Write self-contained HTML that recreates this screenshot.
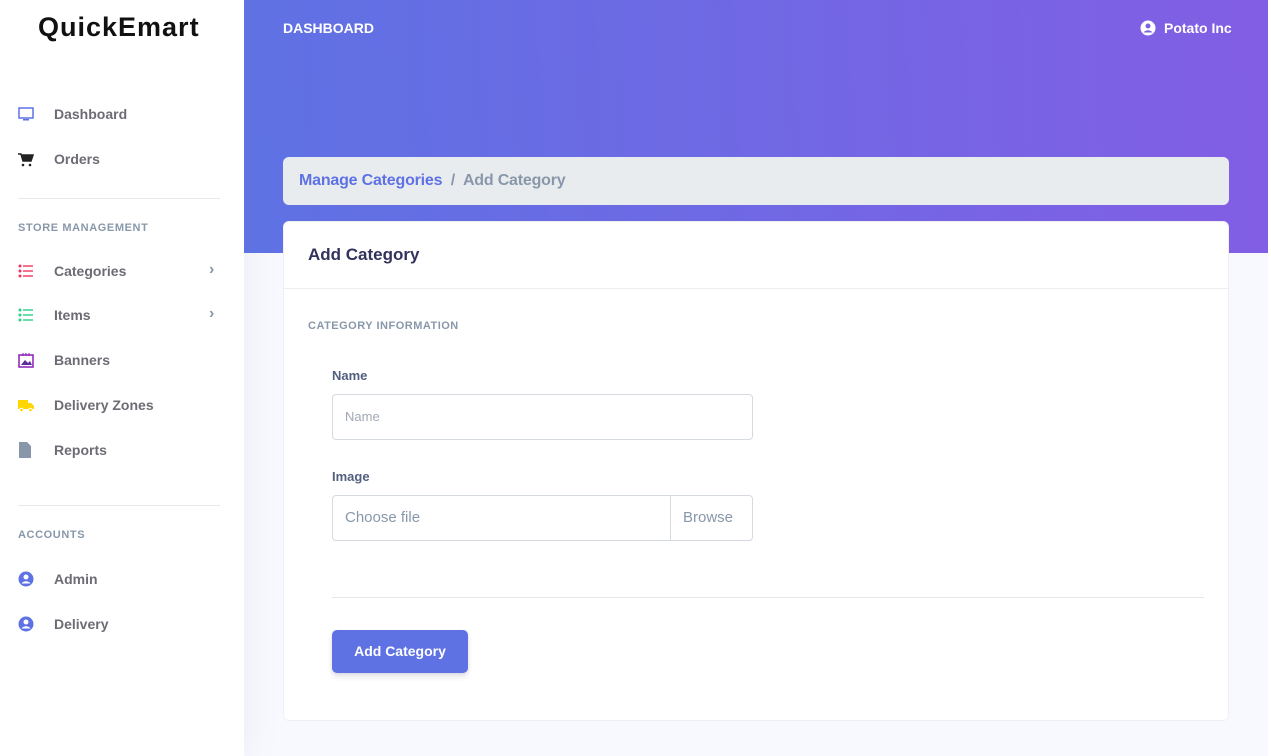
<!DOCTYPE html>
<html><head><style>
*{box-sizing:border-box;margin:0;padding:0}
body{width:1271px;height:756px;overflow:hidden;font-family:"Liberation Sans",sans-serif;background:#f8f9fe;position:relative;color:#525f7f}
.side{position:absolute;left:0;top:0;width:244px;height:756px;background:#fff;box-shadow:0 0 2rem rgba(136,152,170,.15)}
.logo{position:absolute;left:38px;top:12px;font-size:27px;font-weight:bold;color:#111;letter-spacing:1px}
.nav{position:absolute;left:18px;font-size:14px;font-weight:bold;color:#6c6c74;display:flex;align-items:center}
.nav .ic{width:16px;height:16px;margin-right:20px;display:inline-block;position:relative}
.nav span{line-height:16px}
.hr{position:absolute;left:18px;width:202px;height:1px;background:#e6e8ec}
.head{position:absolute;left:18px;font-size:11px;font-weight:bold;letter-spacing:.6px;color:#8898aa}
.chev{position:absolute;left:209px;font-size:16px;color:#8898aa;font-weight:bold}
.top{position:absolute;left:244px;top:0;width:1024px;height:253px;background:linear-gradient(87deg,#5e72e4,#825ee4)}
.strip{position:absolute;left:1268px;top:0;width:3px;height:756px;background:#fff}
.dash{position:absolute;left:283px;top:20px;color:#fff;font-size:14px;font-weight:bold}
.user{position:absolute;left:1140px;top:20px;color:#fff;font-size:14px;font-weight:bold;display:flex;align-items:center}
.bc{position:absolute;left:283px;top:157px;width:946px;height:48px;background:#e9ecef;border-radius:6px;font-size:16px;font-weight:bold;padding:15px 16px;color:#8898aa;letter-spacing:-.2px}
.bc b{color:#5e72e4}
.card{position:absolute;left:283px;top:221px;width:946px;height:500px;background:#fff;border-radius:6px;border:1px solid #eef0f3}
.ch{height:67px;border-bottom:1px solid #eceef2;padding:23px 24px;font-size:17px;font-weight:bold;color:#32325d}
.lbl{position:absolute;font-size:13px;font-weight:bold;color:#525f7f}
.inp{position:absolute;left:48px;width:421px;height:46px;border:1px solid #d5d9e0;border-radius:4px;font-size:13px;color:#a0a8b5;padding:14px 12px}
</style></head><body>
<div class="side">
<div class="logo">QuickEmart</div>
<div class="nav" style="top:106px"><svg class="ic" viewBox="0 0 16 16"><rect x="1" y="2" width="14" height="10" fill="none" stroke="#5e72e4" stroke-width="1.5"/><rect x="5" y="13" width="6" height="1.5" fill="#5e72e4"/></svg><span>Dashboard</span></div>
<div class="nav" style="top:151px"><svg class="ic" viewBox="0 0 16 16"><path d="M0 3h3l2 7h8l2-6H4" fill="#222" stroke="#222" stroke-width="1.5"/><circle cx="5" cy="14" r="1.3" fill="#222"/><circle cx="12" cy="14" r="1.3" fill="#222"/></svg><span>Orders</span></div>
<div class="hr" style="top:198px"></div>
<div class="head" style="top:222px">STORE MANAGEMENT</div>
<div class="nav" style="top:263px"><svg class="ic" viewBox="0 0 16 16"><g fill="#f5365c"><circle cx="2" cy="3" r="1.5"/><circle cx="2" cy="8" r="1.5"/><circle cx="2" cy="13" r="1.5"/><rect x="5" y="2.3" width="10" height="1.4"/><rect x="5" y="7.3" width="10" height="1.4"/><rect x="5" y="12.3" width="10" height="1.4"/></g></svg><span>Categories</span></div>
<div class="chev" style="top:261px">›</div>
<div class="nav" style="top:307px"><svg class="ic" viewBox="0 0 16 16"><g fill="#2dce89"><circle cx="2" cy="3" r="1.5"/><circle cx="2" cy="8" r="1.5"/><circle cx="2" cy="13" r="1.5"/><rect x="5" y="2.3" width="10" height="1.4"/><rect x="5" y="7.3" width="10" height="1.4"/><rect x="5" y="12.3" width="10" height="1.4"/></g></svg><span>Items</span></div>
<div class="chev" style="top:305px">›</div>
<div class="nav" style="top:352px"><svg class="ic" viewBox="0 0 16 16"><rect x="1" y="3" width="14" height="12" fill="none" stroke="#8a1fb8" stroke-width="1.5"/><path d="M3 13l4-5 3 3 2-2 2 4z" fill="#5a2ca0"/><path d="M5 1v3M8 1v3M11 1v3" stroke="#8a1fb8"/></svg><span>Banners</span></div>
<div class="nav" style="top:397px"><svg class="ic" viewBox="0 0 16 16"><path d="M0 3h10v9H0zM10 6h3l3 3v3h-6z" fill="#ffd600"/><circle cx="3.5" cy="13" r="1.8" fill="#ffd600" stroke="#fff"/><circle cx="12.5" cy="13" r="1.8" fill="#ffd600" stroke="#fff"/></svg><span>Delivery Zones</span></div>
<div class="nav" style="top:442px"><svg class="ic" viewBox="0 0 16 16"><path d="M1 0h8l4 4v12H1z" fill="#8898aa"/></svg><span>Reports</span></div>
<div class="hr" style="top:505px"></div>
<div class="head" style="top:529px">ACCOUNTS</div>
<div class="nav" style="top:571px"><svg class="ic" viewBox="0 0 16 16"><circle cx="8" cy="8" r="7.5" fill="#5e72e4"/><circle cx="8" cy="6" r="2.5" fill="#fff"/><path d="M3.5 12.5c2-3 7-3 9 0" fill="#fff"/></svg><span>Admin</span></div>
<div class="nav" style="top:616px"><svg class="ic" viewBox="0 0 16 16"><circle cx="8" cy="8" r="7.5" fill="#5e72e4"/><circle cx="8" cy="6" r="2.5" fill="#fff"/><path d="M3.5 12.5c2-3 7-3 9 0" fill="#fff"/></svg><span>Delivery</span></div>
</div>
<div class="top"></div>
<div class="strip"></div>
<div class="dash">DASHBOARD</div>
<div class="user"><svg width="16" height="16" viewBox="0 0 16 16" style="margin-right:8px"><circle cx="8" cy="8" r="7.5" fill="#fff"/><circle cx="8" cy="6" r="2.5" fill="#7b64e4"/><path d="M3.5 12.5c2-3 7-3 9 0" fill="#7b64e4"/></svg>Potato Inc</div>
<div class="bc"><b>Manage Categories</b> &nbsp;/&nbsp; Add Category</div>
<div class="card">
<div class="ch">Add Category</div>
<div class="lbl" style="left:24px;top:98px;font-size:11px;color:#8898aa;letter-spacing:.5px">CATEGORY INFORMATION</div>
<div class="lbl" style="left:48px;top:146px">Name</div>
<div class="inp" style="top:172px">Name</div>
<div class="lbl" style="left:48px;top:247px">Image</div>
<div class="inp" style="top:273px;font-size:15px;color:#8898aa;padding:13px 12px">Choose file<div style="position:absolute;right:0;top:0;height:44px;width:82px;border-left:1px solid #d5d9e0;padding:13px 12px;background:#fff;border-radius:0 4px 4px 0">Browse</div></div>
<div style="position:absolute;left:48px;top:375px;width:872px;height:1px;background:#e3e6eb"></div>
<div style="position:absolute;left:48px;top:408px;width:136px;height:43px;background:#5e72e4;border-radius:5px;color:#fff;font-size:14px;font-weight:bold;text-align:center;line-height:43px;box-shadow:0 4px 6px rgba(50,50,93,.11),0 1px 3px rgba(0,0,0,.08)">Add Category</div>
</div>
</body></html>
